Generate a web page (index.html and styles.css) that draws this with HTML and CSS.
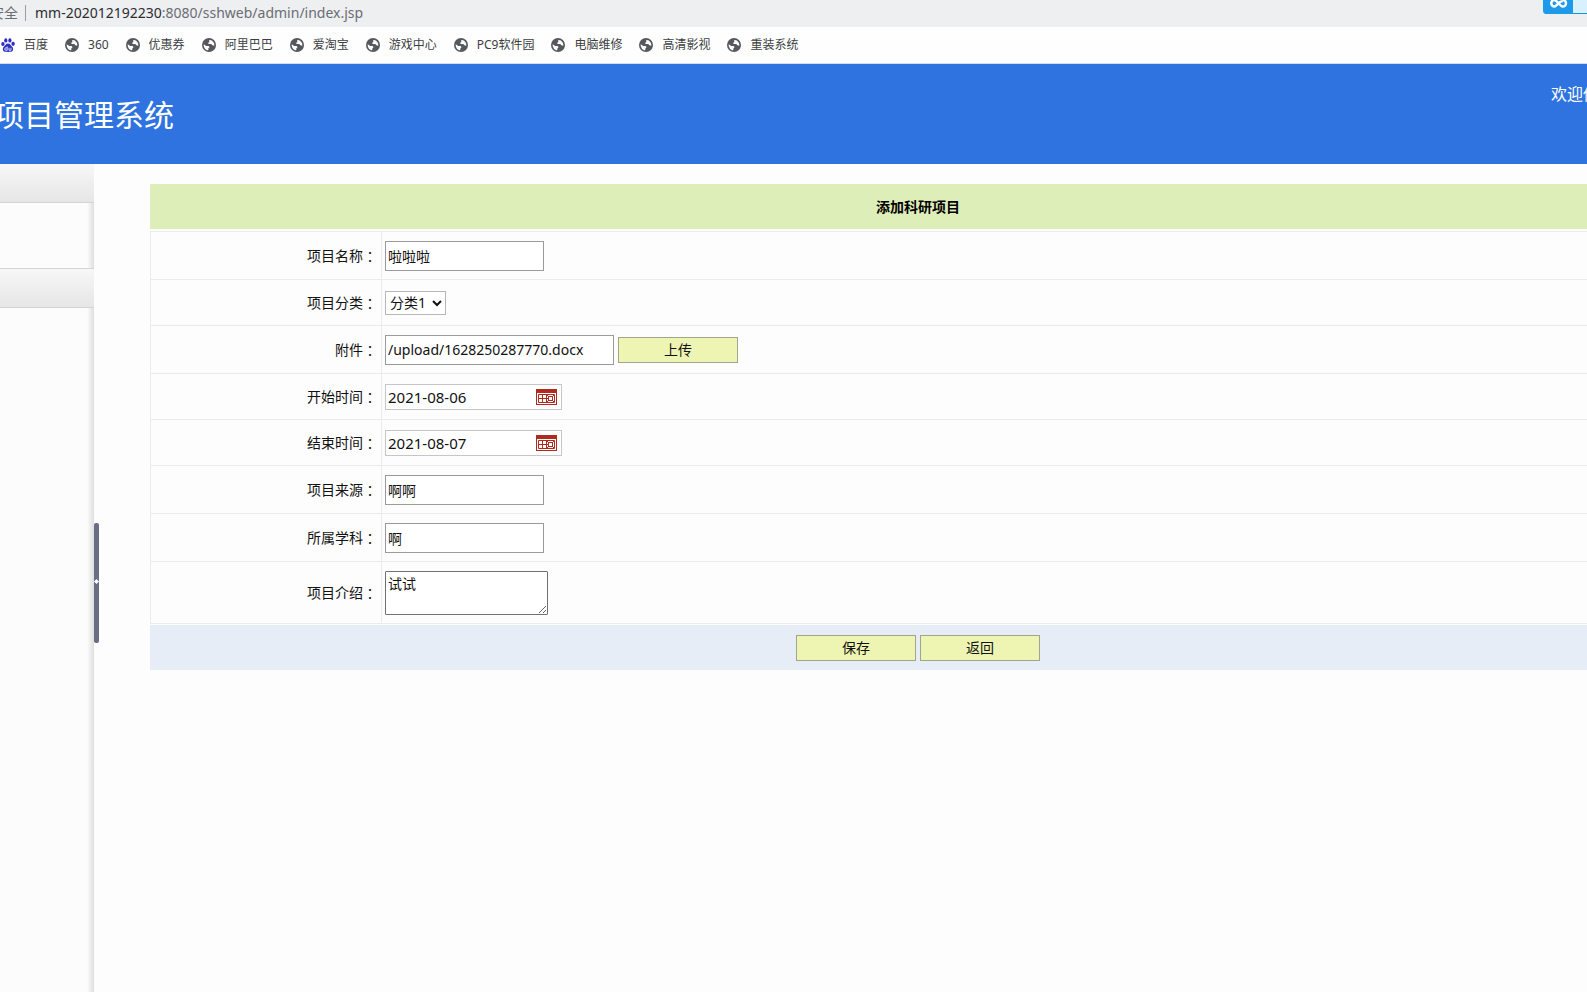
FILE: index.html
```html
<!DOCTYPE html>
<html lang="zh-CN">
<head>
<meta charset="utf-8">
<title>项目管理系统</title>
<link rel="stylesheet" href="styles.css">
</head>
<body>
<svg class="defs" aria-hidden="true">
  <symbol id="globe" viewBox="0 0 14 14">
    <circle cx="7" cy="7" r="7" fill="#55585c"/>
    <path d="M1.700 6.200 L4.200 7.900 L6.600 8 L7.600 9.300 L6.400 10.300 L6.300 12.300 C3.500 12 1.500 9.500 1.700 6.200Z" fill="#fff"/>
    <path d="M7.200 1.900 L9.300 2.200 C10.800 3 12 4.500 12.300 6.200 L12.200 7.700 L10.400 7.200 L9.300 6.100 L7 6.100 L5.800 5.100 L7.300 4.200Z" fill="#fff"/>
  </symbol>
  <symbol id="calendar" viewBox="0 0 21 16">
    <path fill="#b02a1e" d="M0 0h21v16H0z"/>
    <path fill="#fff" d="M1 4h19v11H1z"/>
    <path fill="none" stroke="#b02a1e" d="M2.500 5.500h16v8h-16zM2 9.500h10M6.500 5v9M10.500 5v9M12.500 7.500h4v4h-4zM11 6l2 2M18 6l-2 2M11 13l2-2M18 13l-2-2"/>
  </symbol>
</svg>

<div class="address">
  <span class="secure">安全</span>
  <span class="url"><b>mm-202012192230</b>:8080/sshweb/admin/index.jsp</span>
  <div class="cloud">
    <svg width="30" height="14" viewBox="0 0 30 14" aria-hidden="true"><path d="M20 1.500C17 0 14 6 11.500 6.500A3.200 3.200 0 1 1 11.500 0C14 .5 17 6 19.500 6.500A3.200 3.200 0 1 0 20 0" fill="none" stroke="#fff" stroke-width="2.500"/></svg>
  </div>
</div>

<nav class="bookmarks">
  <a href="#"><svg viewBox="0 0 14 14" aria-hidden="true"><g fill="#2c2fc0"><ellipse cx="1.900" cy="6" rx="1.700" ry="2.100"/><ellipse cx="4.800" cy="2.400" rx="1.600" ry="2.200"/><ellipse cx="8.900" cy="2.400" rx="1.600" ry="2.200"/><ellipse cx="12.100" cy="5.800" rx="1.700" ry="2.100"/><path d="M7 5.500c2 0 2.500 1.700 4 3 1.800 1.500 1.500 5-1 5.300-1.500.2-4.500.2-6 0-2.500-.3-2.800-3.800-1-5.300 1.500-1.300 2-3 4-3z"/></g><path d="M6.200 8.500v3.800H5a1 1 0 0 1 0-2.500h1M8 9.800v2.500h2V9.800" fill="none" stroke="#fff" stroke-width=".8"/></svg>百度</a>
  <a href="#"><svg><use href="#globe"/></svg>360</a>
  <a href="#"><svg><use href="#globe"/></svg>优惠券</a>
  <a href="#"><svg><use href="#globe"/></svg>阿里巴巴</a>
  <a href="#"><svg><use href="#globe"/></svg>爱淘宝</a>
  <a href="#"><svg><use href="#globe"/></svg>游戏中心</a>
  <a href="#"><svg><use href="#globe"/></svg>PC9软件园</a>
  <a href="#"><svg><use href="#globe"/></svg>电脑维修</a>
  <a href="#"><svg><use href="#globe"/></svg>高清影视</a>
  <a href="#"><svg><use href="#globe"/></svg>重装系统</a>
</nav>

<header class="banner">
  <h1>项目管理系统</h1>
  <span class="welcome">欢迎你</span>
</header>

<div class="content">
  <aside class="sidebar">
    <div class="group-head"></div>
    <div class="group-body short"></div>
    <div class="group-head"></div>
    <div class="group-body"></div>
  </aside>
  <div class="splitter"><div class="handle"><svg width="5" height="5" viewBox="0 0 5 5" aria-hidden="true"><path d="M2.500 0L5 2.500 2.500 5 0 2.500z" fill="#fff"/></svg></div></div>
  <main>
    <form class="project">
      <h2>添加科研项目</h2>
      <div class="row"><label for="name">项目名称<i lang="zh-TW">：</i></label><div class="field"><input class="text" id="name" type="text" value="啦啦啦"></div></div>
      <div class="row low"><label for="kind">项目分类<i lang="zh-TW">：</i></label><div class="field"><select id="kind"><option>分类1</option></select></div></div>
      <div class="row"><label for="file">附件<i lang="zh-TW">：</i></label><div class="field"><input class="text wide" id="file" type="text" value="/upload/1628250287770.docx"><button type="button">上传</button></div></div>
      <div class="row low"><label for="start">开始时间<i lang="zh-TW">：</i></label><div class="field"><div class="date"><input id="start" type="text" value="2021-08-06"><svg aria-hidden="true"><use href="#calendar"/></svg></div></div></div>
      <div class="row low"><label for="end">结束时间<i lang="zh-TW">：</i></label><div class="field"><div class="date"><input id="end" type="text" value="2021-08-07"><svg aria-hidden="true"><use href="#calendar"/></svg></div></div></div>
      <div class="row"><label for="source">项目来源<i lang="zh-TW">：</i></label><div class="field"><input class="text" id="source" type="text" value="啊啊"></div></div>
      <div class="row"><label for="subject">所属学科<i lang="zh-TW">：</i></label><div class="field"><input class="text" id="subject" type="text" value="啊"></div></div>
      <div class="row tall"><label for="intro">项目介绍<i lang="zh-TW">：</i></label><div class="field"><textarea id="intro">试试</textarea></div></div>
      <div class="actions"><button type="button">保存</button><button type="button">返回</button></div>
    </form>
  </main>
</div>
</body>
</html>
```
FILE: styles.css
```css
* { box-sizing: border-box; }
body {
  margin: 0;
  min-height: 100vh;
  display: flex;
  flex-direction: column;
  overflow: hidden;
  background: #fdfdfd;
  color: #111;
  font: 14px/20px "Noto Sans", "Noto Sans CJK SC", sans-serif;
}
input, select, textarea, button { font: inherit; color: inherit; }
.defs { display: none; }

.address {
  display: flex;
  align-items: center;
  height: 27px;
  padding-bottom: 1px;
  background: #eeeff1;
  color: #6a6d71;
}
.secure {
  margin-left: -10px;
  padding-right: 7px;
  border-right: 1px solid #9a9c9f;
  line-height: 16px;
}
.url { margin-left: 9px; }
.url b { font-weight: 400; color: #2b2d30; }
.cloud {
  display: flex;
  align-self: flex-start;
  width: 44px;
  height: 14px;
  margin-left: auto;
  background: #d9f1fd;
  border-bottom: 1px solid #1593dc;
  border-radius: 0 0 0 4px;
}
.cloud svg { background: #1d9bea; border-radius: 0 0 0 4px; }

.bookmarks {
  display: flex;
  align-items: center;
  gap: 17px;
  height: 37px;
  padding-left: 1px;
  border-bottom: 1px solid #d5dcea;
  background: #fefefe;
}
.bookmarks a {
  display: flex;
  align-items: center;
  gap: 9px;
  color: #3c3e41;
  font-size: 12px;
  line-height: 22px;
  text-decoration: none;
  white-space: nowrap;
}
.bookmarks svg { width: 14px; height: 14px; }

.banner {
  display: flex;
  justify-content: space-between;
  height: 100px;
  background: #2e73e0;
  color: #fff;
}
.banner h1 {
  margin: 0 0 0 -6px;
  font-size: 30px;
  font-weight: 400;
  line-height: 102px;
}
.welcome {
  margin: 20px -12px 0 0;
  font-size: 16px;
}

.content { flex: 1; display: flex; }
.sidebar {
  display: flex;
  flex-direction: column;
  width: 94px;
}
.group-head {
  height: 39px;
  background: linear-gradient(#f7f7f7, #e6e6e6);
  border-bottom: 1px solid #d4d4d4;
}
.group-body {
  flex: 1;
  background: linear-gradient(to left, #dedede, #fcfcfc 7px);
}
.group-body.short {
  flex: 0 0 66px;
  border-bottom: 1px solid #d4d4d4;
}
.splitter {
  display: flex;
  align-items: center;
  width: 5px;
}
.handle {
  display: flex;
  align-items: center;
  height: 120px;
  margin-top: 10px;
  padding-bottom: 3px;
  background: #696e85;
  border-radius: 2px;
}

main {
  flex: 1;
  min-width: 0;
  padding: 20px 0 0 51px;
}
.project { margin-right: -99px; }
.project h2 {
  margin: 0 0 2px;
  background: #deeeb9;
  color: #000;
  font-size: 14px;
  line-height: 45px;
  text-align: center;
}
.row {
  display: grid;
  grid-template-columns: 231px 1fr;
  height: 48px;
  border: 1px solid #e9ecee;
  border-width: 0 0 1px 1px;
}
h2 + .row { height: 49px; border-top-width: 1px; }
.row.low { height: 46px; }
.row.tall { height: 62px; }
.row label {
  display: flex;
  align-items: center;
  justify-content: flex-end;
  padding-right: 4px;
  border-right: 1px solid #e9ecee;
}
.row i { font-family: "Noto Sans CJK TC", sans-serif; font-style: normal; }
.field {
  display: flex;
  align-items: center;
  gap: 4px;
  padding-left: 3px;
}
.text {
  width: 159px;
  height: 30px;
  padding: 1px 2px;
  border: 1px solid #999c9f;
  background: #fff;
}
.text.wide { width: 229px; }
select {
  height: 24px;
  width: 61px;
  padding: 0;
  border: 1px solid #b5b8ba;
  background: #fff;
}
button {
  width: 120px;
  height: 26px;
  padding: 0;
  border: 1px solid #a0a68c;
  background: #eef5b2;
}
.date {
  display: flex;
  align-items: center;
  width: 177px;
  height: 26px;
  padding-right: 4px;
  border: 1px solid #c4c7c9;
  background: #fff;
}
.date input {
  flex: 1;
  min-width: 0;
  padding: 0 2px;
  border: 0;
  background: none;
  font-size: 15px;
}
.date svg { width: 21px; height: 16px; }
textarea {
  width: 163px;
  height: 44px;
  padding: 2px;
  border: 1px solid #6f7173;
  border-radius: 1px;
  background: #fff;
}
.actions {
  display: flex;
  align-items: center;
  justify-content: center;
  gap: 4px;
  height: 45px;
  margin-top: 1px;
  background: #e7edf6;
}
```
